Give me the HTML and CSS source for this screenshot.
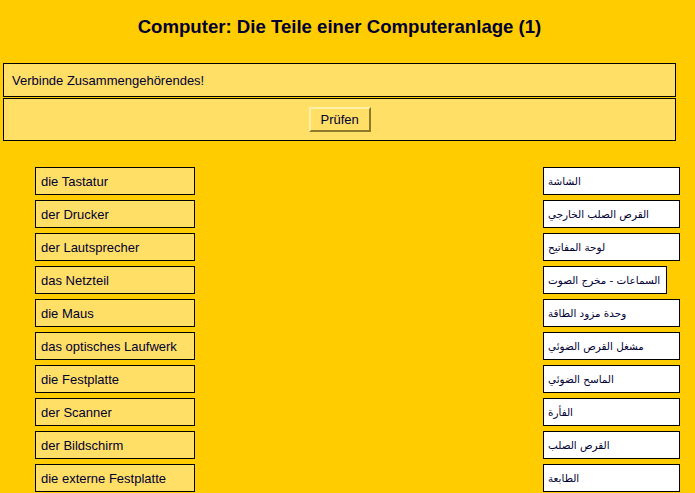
FILE: index.html
```html
<!DOCTYPE html>
<html lang="de">
<head>
<meta charset="utf-8">
<title>Computer: Die Teile einer Computeranlage (1)</title>
<link rel="stylesheet" href="styles.css">
</head>
<body>
<div class="page">
<h2 class="title">Computer: Die Teile einer Computeranlage (1)</h2>
<div class="panel instr">Verbinde Zusammengehörendes!</div>
<div class="panel actions"><button class="check" type="button">Prüfen</button></div>
<div class="match">
  <div class="col left">
    <div class="item">die Tastatur</div>
    <div class="item">der Drucker</div>
    <div class="item">der Lautsprecher</div>
    <div class="item">das Netzteil</div>
    <div class="item">die Maus</div>
    <div class="item">das optisches Laufwerk</div>
    <div class="item">die Festplatte</div>
    <div class="item">der Scanner</div>
    <div class="item">der Bildschirm</div>
    <div class="item">die externe Festplatte</div>
  </div>
  <div class="col right">
    <div class="card">الشاشة</div>
    <div class="card">القرص الصلب الخارجي</div>
    <div class="card">لوحة المفاتيح</div>
    <div class="card card-narrow">السماعات - مخرج الصوت</div>
    <div class="card">وحدة مزود الطاقة</div>
    <div class="card">مشغل القرص الضوئي</div>
    <div class="card">الماسح الضوئي</div>
    <div class="card">الفأرة</div>
    <div class="card">القرص الصلب</div>
    <div class="card">الطابعة</div>
  </div>
</div>
</div>
</body>
</html>
```
FILE: styles.css
```css
html, body {
  margin: 0;
  padding: 0;
}
body {
  background: #ffcc00;
  color: #000033;
  font-family: "Liberation Sans", Arial, "DejaVu Sans", sans-serif;
  font-size: 13px;
  height: 493px;
  overflow: hidden;
}
.page {
  width: 679px;
}
.title {
  margin: 16px 0 0 0;
  font-size: 18.6px;
  font-weight: bold;
  text-align: center;
  line-height: 21px;
  color: #000033;
}
.panel {
  margin-left: 3px;
  width: 671px;
  border: 1px solid #000;
  background: #ffdf66;
}
.instr {
  margin-top: 26px;
  height: 32px;
  padding: 0 8px;
  width: 655px;
  display: flex;
  align-items: center;
}
.actions {
  margin-top: 1px;
  height: 41px;
  display: flex;
  justify-content: center;
  align-items: flex-start;
}
.check {
  margin-top: 8px;
  font-family: "Liberation Sans", Arial, sans-serif;
  font-size: 13px;
  color: #000033;
  background: #ffdf66;
  border: 2px solid;
  border-color: #fff0a8 #8c7a2c #8c7a2c #fff0a8;
  padding: 3px 10px;
  line-height: 15px;
  height: 25px;
  width: 62px;
  cursor: pointer;
}
.match {
  margin-top: 26px;
  display: flex;
  justify-content: space-between;
  padding: 0 0 0 35px;
  width: 645px;
}
.col {
  display: flex;
  flex-direction: column;
  gap: 5px;
}
.right {
  align-items: flex-start;
}
.item {
  box-sizing: border-box;
  width: 160px;
  height: 28px;
  border: 1px solid #000;
  background: #ffdf66;
  padding: 0 5px;
  display: flex;
  align-items: center;
  white-space: nowrap;
}
.card {
  box-sizing: border-box;
  width: 137px;
  height: 28px;
  border: 1px solid #000;
  background: #fff;
  padding: 0 4px;
  display: flex;
  align-items: center;
  white-space: nowrap;
  font-family: "DejaVu Sans", sans-serif;
  font-size: 10.4px;
}
.card-narrow {
  width: 124px;
}
```
